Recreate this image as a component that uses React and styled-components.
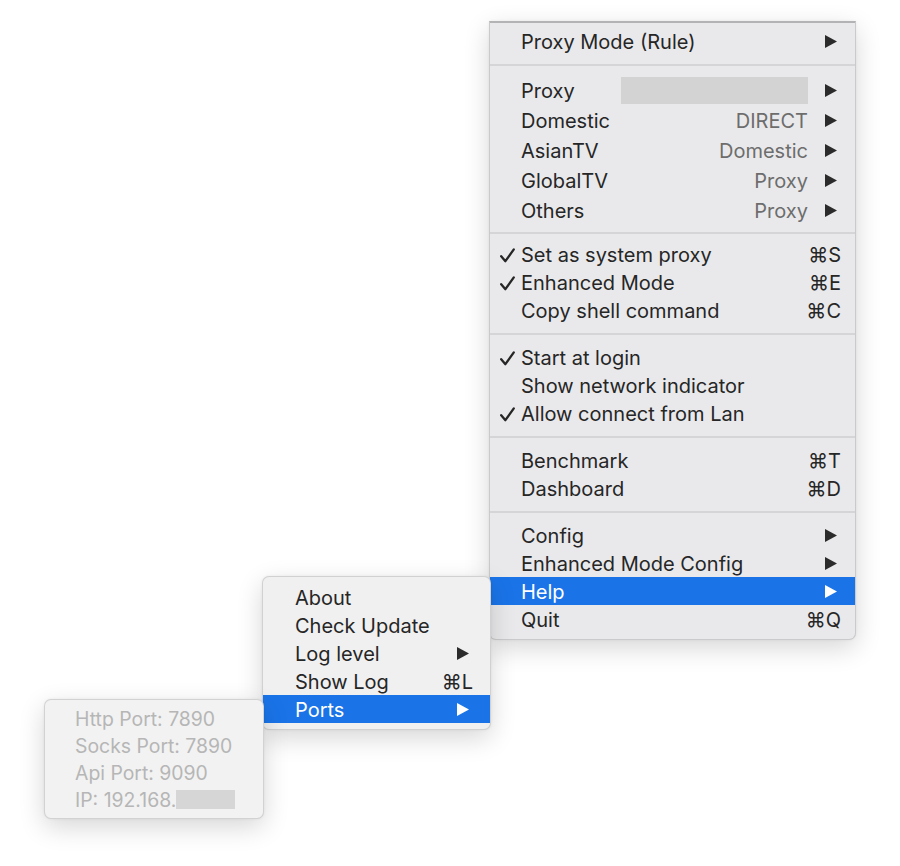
import React from 'react';
import styled, { createGlobalStyle, css } from 'styled-components';

const GlobalStyle = createGlobalStyle`
  html, body {
    margin: 0;
    padding: 0;
    background: #fff;
  }
  body {
    font-family: Inter, "Noto Sans", "DejaVu Sans", sans-serif;
    -webkit-font-smoothing: antialiased;
  }
`;

const Desktop = styled.div`
  position: relative;
  width: 900px;
  height: 866px;
  overflow: hidden;
  background: #fff;
`;

const Menu = styled.div`
  position: absolute;
  left: ${(p) => p.$x}px;
  top: ${(p) => p.$y}px;
  width: ${(p) => p.$w}px;
  padding: ${(p) => (p.$pad != null ? p.$pad : 6)}px 0 6px;
  box-sizing: border-box;
  display: flex;
  flex-direction: column;
  background: ${(p) => p.$bg || '#e9e9eb'};
  border: 1px solid rgba(0, 0, 0, 0.13);
  border-radius: 7px;
  box-shadow: 0 8px 26px rgba(0, 0, 0, 0.16), 0 0 3px rgba(0, 0, 0, 0.06);
  ${(p) =>
    p.$dropdown &&
    css`
      border-top: 2px solid #b3b3b5;
      border-radius: 0 0 7px 7px;
    `}
`;

const Item = styled.div`
  box-sizing: border-box;
  display: flex;
  align-items: center;
  height: ${(p) => p.$h || 28}px;
  padding: 2px ${(p) => p.$right || 14}px 0 ${(p) => p.$indent || 9}px;
  font-size: ${(p) => p.$size || 20}px;
  color: ${(p) => (p.$active ? '#fff' : p.$disabled ? '#b6b6b6' : '#262626')};
  background: ${(p) => (p.$active ? '#1a74e8' : 'transparent')};
  white-space: nowrap;
`;

const CheckCol = styled.span`
  width: 22px;
  flex: none;
  display: flex;
  align-items: center;
`;

const Label = styled.span`
  flex: 1;
`;

const Value = styled.span`
  color: #6d6d6d;
  margin-right: 17px;
`;

const Redacted = styled.span`
  display: block;
  width: 187px;
  height: 27px;
  margin-top: -2px;
  background: #d3d3d4;
  margin-right: 17px;
`;

const InlineRedacted = styled.span`
  display: inline-block;
  width: 59px;
  height: 19px;
  vertical-align: -3px;
  background: #d6d6d6;
`;

const Shortcut = styled.span`
  font-family: Inter, "DejaVu Sans", sans-serif;
`;

const ArrowBox = styled.svg`
  width: 12px;
  height: 13px;
  margin: -2px 4px 0 0;
  flex: none;
`;

const Separator = styled.div`
  height: ${(p) => p.$h || 19}px;
  display: flex;
  align-items: center;
  &::after {
    content: '';
    display: block;
    width: 100%;
    height: 2px;
    background: #d5d5d7;
  }
`;

const Arrow = ({ light }) => (
  <ArrowBox viewBox="0 0 12 13">
    <polygon points="0,0 12,6.5 0,13" fill={light ? '#fff' : '#2b2b2b'} />
  </ArrowBox>
);

const Check = () => (
  <svg width="17" height="17" viewBox="0 0 17 17">
    <path d="M2.2 9.2 L6.4 14.2 L14.8 2.4" fill="none" stroke="#262626" strokeWidth="2.3" strokeLinecap="round" strokeLinejoin="round" />
  </svg>
);

const Row = ({ checked, label, value, redacted, shortcut, arrow, active, h }) => (
  <Item $active={active} $h={h}>
    <CheckCol>{checked && <Check />}</CheckCol>
    <Label>{label}</Label>
    {redacted && <Redacted />}
    {value && <Value>{value}</Value>}
    {shortcut && <Shortcut>⌘{shortcut}</Shortcut>}
    {arrow && <Arrow light={active} />}
  </Item>
);

const SubRow = ({ label, shortcut, arrow, active }) => (
  <Item $active={active} $indent={10} $right={17}>
    <CheckCol />
    <Label>{label}</Label>
    {shortcut && <Shortcut>⌘{shortcut}</Shortcut>}
    {arrow && <Arrow light={active} />}
  </Item>
);

const PortRow = styled(Item).attrs({ $disabled: true, $size: 19.4 })`
  height: 27px;
  padding-left: 30px;
`;

export default function App() {
  return (
    <Desktop>
      <GlobalStyle />
      <Menu $x={489} $y={21} $w={367} $pad={4} $dropdown>
        <Row label="Proxy Mode (Rule)" arrow />
        <Separator $h={20} />
        <Row h={30} label="Proxy" redacted arrow />
        <Row h={30} label="Domestic" value="DIRECT" arrow />
        <Row h={30} label="AsianTV" value="Domestic" arrow />
        <Row h={30} label="GlobalTV" value="Proxy" arrow />
        <Row h={30} label="Others" value="Proxy" arrow />
        <Separator $h={15} />
        <Row checked label="Set as system proxy" shortcut="S" />
        <Row checked label="Enhanced Mode" shortcut="E" />
        <Row label="Copy shell command" shortcut="C" />
        <Separator />
        <Row checked label="Start at login" />
        <Row label="Show network indicator" />
        <Row checked label="Allow connect from Lan" />
        <Separator />
        <Row label="Benchmark" shortcut="T" />
        <Row label="Dashboard" shortcut="D" />
        <Separator />
        <Row label="Config" arrow />
        <Row label="Enhanced Mode Config" arrow />
        <Row label="Help" arrow active />
        <Row label="Quit" shortcut="Q" />
      </Menu>

      <Menu $x={262} $y={576} $w={229} $bg="#f0f0f0">
        <SubRow label="About" />
        <SubRow label="Check Update" />
        <SubRow label="Log level" arrow />
        <SubRow label="Show Log" shortcut="L" />
        <SubRow label="Ports" arrow active />
      </Menu>

      <Menu $x={44} $y={699} $w={220} $pad={4} $bg="#f2f2f2">
        <PortRow>Http Port: 7890</PortRow>
        <PortRow>Socks Port: 7890</PortRow>
        <PortRow>Api Port: 9090</PortRow>
        <PortRow>
          IP: 192.168.
          <InlineRedacted />
        </PortRow>
      </Menu>
    </Desktop>
  );
}
